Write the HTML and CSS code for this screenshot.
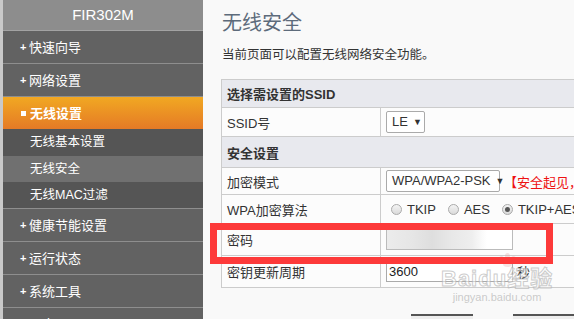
FILE: index.html
```html
<!DOCTYPE html>
<html>
  <head>
    <meta charset="UTF-8">
    <title>无线安全</title>
    <link rel="stylesheet" href="styles.css">
  </head>
  <body>
    <div class="page">
      <div class="edge"></div>

      <!-- left menu -->
      <div class="menu">
        <div class="brand">FIR302M</div>
        <div class="item"><span class="plus">+</span>快速向导</div>
        <div class="item"><span class="plus">+</span>网络设置</div>
        <div class="item active"><span class="sq"></span>无线设置</div>
        <div class="sub">无线基本设置</div>
        <div class="sub current">无线安全</div>
        <div class="sub last">无线MAC过滤</div>
        <div class="item"><span class="plus">+</span>健康节能设置</div>
        <div class="item"><span class="plus">+</span>运行状态</div>
        <div class="item"><span class="plus">+</span>系统工具</div>
        <div class="item"><span class="plus">+</span>退出</div>
      </div>

      <!-- main panel -->
      <div class="main">
        <h1 class="title">无线安全</h1>
        <p class="desc">当前页面可以配置无线网络安全功能。</p>

        <div class="table">
          <div class="head h1">选择需设置的SSID</div>
          <div class="row r-ssid">
            <div class="label">SSID号</div>
            <div class="value"><span class="select small">LE <i>▼</i></span></div>
          </div>
          <div class="head h2">安全设置</div>
          <div class="row r-mode">
            <div class="label">加密模式</div>
            <div class="value"><span class="select wide">WPA/WPA2-PSK <i>▼</i></span><span class="warn">【安全起见，</span></div>
          </div>
          <div class="row r-algo">
            <div class="label">WPA加密算法</div>
            <div class="value radios">
              <span class="opt"><span class="radio"></span>TKIP</span>
              <span class="opt"><span class="radio"></span>AES</span>
              <span class="opt"><span class="radio on"></span>TKIP+AES</span>
            </div>
          </div>
          <div class="row r-pass">
            <div class="label">密码</div>
            <div class="value"><span class="input blurred"></span></div>
          </div>
          <div class="row r-renew lastrow">
            <div class="label">密钥更新周期</div>
            <div class="value"><span class="input">3600</span><span class="unit">秒</span></div>
          </div>
        </div>

        <div class="buttons">
          <span class="btn"></span>
          <span class="btn"></span>
        </div>

        <div class="mark">
          <div class="paw"><i></i><i></i><i></i><b></b></div>
          <div class="mark-big">Bai<span class="du">du</span>经验</div>
          <div class="mark-small">jingyan.baidu.com</div>
        </div>
      </div>

      <!-- red highlight box drawn over the password row -->
      <div class="highlight"></div>
    </div>
  </body>
</html>
```

FILE: styles.css
```css
* {
  box-sizing: border-box;
}

body {
  margin: 0;
  background-color: #f9f9f9;
  font-family: "Liberation Sans", "Noto Sans CJK SC", sans-serif;
  overflow: hidden;
}

.page {
  display: flex;
  height: 319px;
  position: relative;
  overflow: hidden;
}

.edge {
  width: 3px;
  background-color: #c9c9c9;
}

/* menu */

.menu {
  width: 200px;
  flex-shrink: 0;
  background-color: #626262;
  color: white;
}

.brand {
  height: 31px;
  line-height: 30px;
  background-color: #8d8d8d;
  text-align: center;
  font-size: 15px;
  border-bottom: 1px solid #a3a3a3;
}

.item {
  height: 33px;
  line-height: 31px;
  padding-left: 17px;
  font-size: 13px;
  border-bottom: 1px solid #8e8e8e;
  display: flex;
  align-items: center;
}

.plus {
  width: 9px;
  font-size: 11px;
  font-weight: bold;
}

.sq {
  width: 5px;
  height: 5px;
  background-color: white;
  margin: 0 4px 0 1px;
}

.item.active {
  height: 32px;
  border-bottom: none;
  background: linear-gradient(#f1a822, #e57a26);
  font-weight: bold;
}

.sub {
  height: 27px;
  line-height: 26px;
  padding-left: 27px;
  font-size: 12.5px;
  background-color: #555555;
}

.sub.current {
  height: 26px;
  background-color: #707070;
}

.sub.last {
  border-bottom: 1px solid #8e8e8e;
}

/* main */

.main {
  flex: 1;
  padding: 0 0 0 18px;
  position: relative;
  overflow: hidden;
}

.title {
  margin: 10px 0 0 1px;
  font-size: 20px;
  font-weight: normal;
  color: #5d6b7b;
  line-height: 26px;
}

.desc {
  margin: 11px 0 0 1px;
  font-size: 12.5px;
  color: #333;
  line-height: 16px;
}

.table {
  margin-top: 16px;
  width: 380px;
  border: 1px solid #cccccc;
  border-right: none;
  color: #333;
  font-size: 13px;
  white-space: nowrap;
}

.head {
  background-color: #e8e9ee;
  font-weight: bold;
  padding-left: 5px;
  border-bottom: 1px solid #cccccc;
  display: flex;
  align-items: center;
}

.h1 { height: 28px; }
.h2 { height: 31px; }

.row {
  display: flex;
  background-color: #fcfcfc;
  border-bottom: 1px solid #cccccc;
}

.row.lastrow {
  border-bottom: none;
}

.r-ssid { height: 29px; }
.r-mode { height: 27px; }
.r-algo { height: 29px; }
.r-pass { height: 32px; }
.r-renew { height: 31px; }

.label {
  width: 159px;
  flex-shrink: 0;
  border-right: 1px solid #cccccc;
  padding-left: 5px;
  display: flex;
  align-items: center;
}

.value {
  flex: 1;
  display: flex;
  align-items: center;
  padding-left: 5px;
}

.select {
  flex-shrink: 0;
  height: 22px;
  border: 1px solid #aaaaaa;
  border-radius: 2px;
  background-color: white;
  font-size: 13px;
  line-height: 20px;
  padding-left: 5px;
  display: flex;
  align-items: center;
}

.select i {
  font-style: normal;
  font-size: 9px;
  margin-left: 5px;
}

.small { width: 39px; }
.wide { width: 114px; }

.warn {
  color: #ee1111;
  margin-left: 4px;
}

.radios {
  padding-left: 10px;
}

.opt {
  display: flex;
  align-items: center;
  margin-right: 12px;
}

.radio {
  width: 11px;
  height: 11px;
  border-radius: 50%;
  border: 1px solid #aaaaaa;
  background: linear-gradient(#f4f4f4, #dadada);
  margin-right: 5px;
  position: relative;
}

.radio.on::after {
  content: "";
  position: absolute;
  left: 2px;
  top: 2px;
  width: 5px;
  height: 5px;
  border-radius: 50%;
  background-color: #555;
}

.input {
  flex-shrink: 0;
  width: 127px;
  height: 21px;
  border: 1px solid #aaaaaa;
  background-color: white;
  font-size: 13px;
  line-height: 19px;
  padding-left: 2px;
  color: #222;
}

.input.blurred {
  border-color: #bbbbbb;
  background: linear-gradient(90deg, #ececec 0, #e6e6e6 25px, #dedede 45px, #e8e8e8 65px, #eeeeee 85px, #fafafa 95px, #ffffff 100px);
}

.unit {
  margin-left: 4px;
}

.buttons {
  display: flex;
  gap: 40px;
  margin: 26px 0 0 190px;
}

.btn {
  width: 119px;
  height: 20px;
  border-top: 2px solid #555555;
  background-color: #eeeeee;
}

/* watermark */

.mark {
  position: absolute;
  left: 238px;
  top: 253px;
  color: rgba(190, 190, 190, 0.55);
  text-align: center;
}

.paw {
  position: relative;
  height: 14px;
  margin-left: 58px;
  width: 20px;
}

.paw i {
  position: absolute;
  width: 5px;
  height: 6px;
  border-radius: 50%;
  background-color: rgba(220, 170, 170, 0.35);
  top: 0;
}

.paw i:nth-child(1) { left: 0; top: 3px; }
.paw i:nth-child(2) { left: 6px; }
.paw i:nth-child(3) { left: 12px; top: 3px; }

.paw b {
  position: absolute;
  left: 4px;
  top: 8px;
  width: 9px;
  height: 6px;
  border-radius: 50%;
  background-color: rgba(220, 170, 170, 0.3);
}

.mark-big {
  font-size: 22px;
  font-weight: bold;
  line-height: 24px;
  letter-spacing: 1px;
  -webkit-text-stroke: 1px rgba(170, 170, 170, 0.6);
  color: rgba(255, 255, 255, 0.5);
}

.mark-small {
  font-size: 11px;
  line-height: 13px;
  color: rgba(170, 170, 170, 0.6);
}

/* red highlight */

.highlight {
  position: absolute;
  left: 210px;
  top: 223px;
  width: 343px;
  height: 41px;
  border: 7px solid #fd3a3a;
}
```
